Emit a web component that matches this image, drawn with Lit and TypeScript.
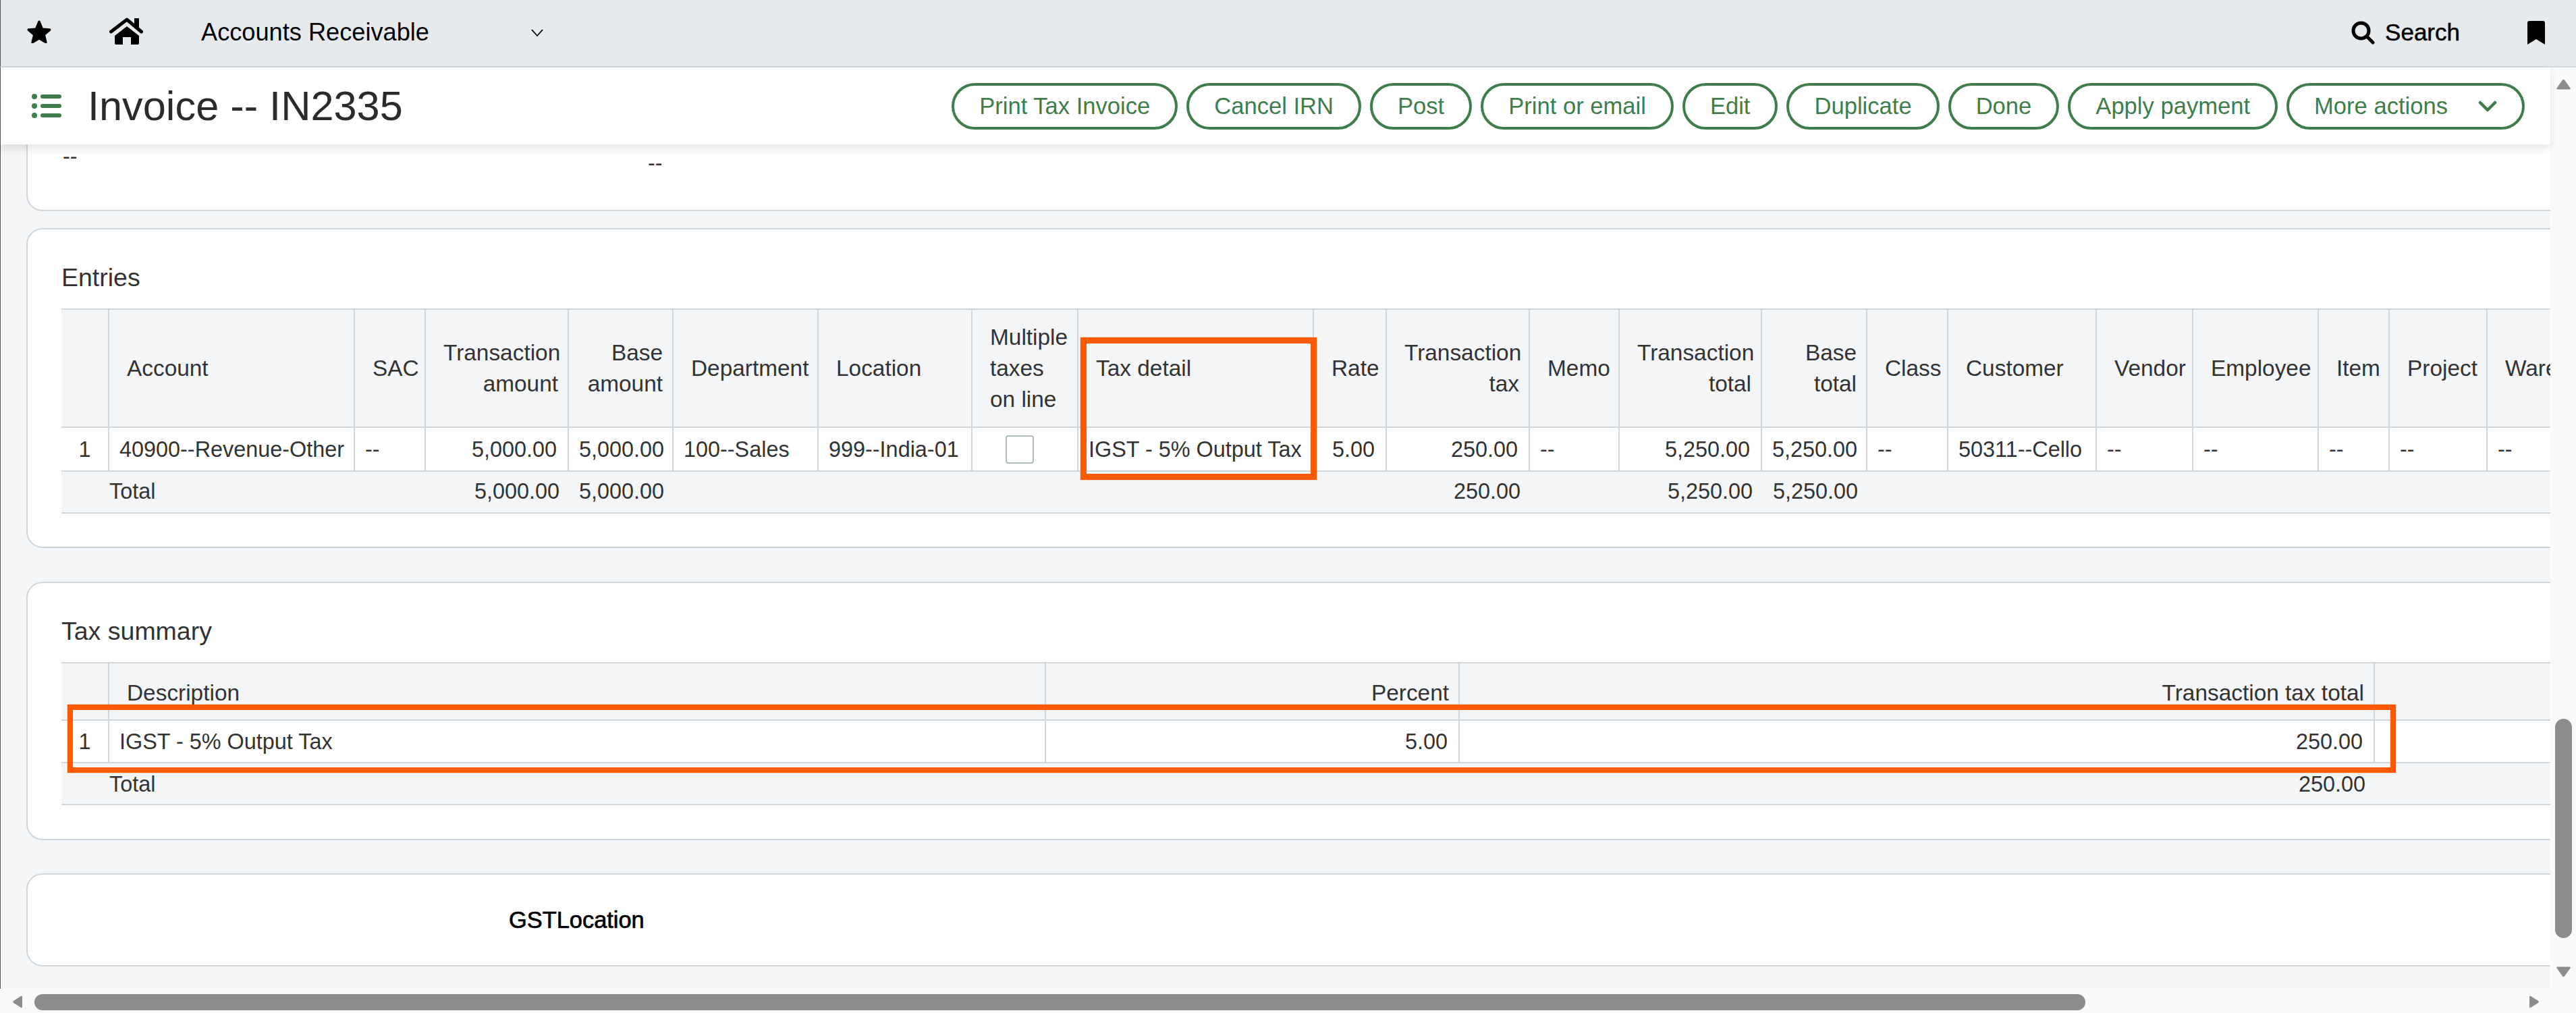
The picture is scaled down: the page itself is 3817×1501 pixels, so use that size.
import { LitElement, html, css, svg } from 'lit';
import { customElement } from 'lit/decorators.js';

type Column = {
  label: string;
  width: number;
  right?: boolean;
  value?: string;
  total?: string;
};

const entryColumns: Column[] = [
  { label: '', width: 71, value: '1' },
  { label: 'Account', width: 364, value: '40900--Revenue-Other', total: 'Total' },
  { label: 'SAC', width: 105, value: '--' },
  { label: 'Transaction\namount', width: 212, right: true, value: '5,000.00', total: '5,000.00' },
  { label: 'Base\namount', width: 155, right: true, value: '5,000.00', total: '5,000.00' },
  { label: 'Department', width: 215, value: '100--Sales' },
  { label: 'Location', width: 228, value: '999--India-01' },
  { label: 'Multiple\ntaxes\non line', width: 157, value: 'checkbox' },
  { label: 'Tax detail', width: 349, value: 'IGST - 5% Output Tax' },
  { label: 'Rate', width: 108, value: '5.00' },
  { label: 'Transaction\ntax', width: 212, right: true, value: '250.00', total: '250.00' },
  { label: 'Memo', width: 133, value: '--' },
  { label: 'Transaction\ntotal', width: 211, right: true, value: '5,250.00', total: '5,250.00' },
  { label: 'Base\ntotal', width: 156, right: true, value: '5,250.00', total: '5,250.00' },
  { label: 'Class', width: 120, value: '--' },
  { label: 'Customer', width: 220, value: '50311--Cello' },
  { label: 'Vendor', width: 143, value: '--' },
  { label: 'Employee', width: 186, value: '--' },
  { label: 'Item', width: 105, value: '--' },
  { label: 'Project', width: 145, value: '--' },
  { label: 'Warehouse', width: 215, value: '--' },
];

const taxColumns: Column[] = [
  { label: '', width: 71, value: '1' },
  { label: 'Description', width: 1388, value: 'IGST - 5% Output Tax', total: 'Total' },
  { label: 'Percent', width: 613, right: true, value: '5.00' },
  { label: 'Transaction tax total', width: 1356, right: true, value: '250.00', total: '250.00' },
  { label: '', width: 400 },
];

const actions = [
  'Print Tax Invoice',
  'Cancel IRN',
  'Post',
  'Print or email',
  'Edit',
  'Duplicate',
  'Done',
  'Apply payment',
];

@customElement('app-root')
export class AppRoot extends LitElement {
  renderTable(columns: Column[], kind: string) {
    return html`
      <table class=${kind}>
        <colgroup>
          ${columns.map(c => html`<col style="width:${c.width}px" />`)}
        </colgroup>
        <thead>
          <tr>
            ${columns.map(
              (c, i) => html`<th class="${c.right ? 'right' : ''} ${i === columns.length - 1 && kind === 'tax' ? 'end' : ''}">${c.label}</th>`
            )}
          </tr>
        </thead>
        <tbody>
          <tr>
            ${columns.map((c, i) => this.renderCell(c, i, kind === 'tax' && i === columns.length - 1))}
          </tr>
        </tbody>
        <tfoot>
          <tr>
            ${columns.map(c => html`<td class="${c.right ? 'right' : ''}">${c.total ?? ''}</td>`)}
          </tr>
        </tfoot>
      </table>
    `;
  }

  renderCell(c: Column, i: number, isEnd: boolean) {
    if (c.value === 'checkbox') {
      return html`<td><span class="checkbox"></span></td>`;
    }
    const classes = [c.right || c.label === 'Rate' ? 'right' : '', i === 0 ? 'index' : '', isEnd ? 'end' : ''];
    return html`<td class=${classes.join(' ')}>${c.value ?? ''}</td>`;
  }

  renderTopBar() {
    return html`
      <div class="topbar">
        <svg class="star" viewBox="0 0 36 35" width="36" height="35">
          <path
            d="M18 1.5c.8 0 1.300.5 1.700 1.300l4 9.700 10 .8c1.800.2 2.500 2 1.100 3.200l-7.700 6.600 2.500 10.100c.4 1.700-1.200 2.800-2.600 1.900L18 29.800l-9 5.400c-1.400.9-3-.2-2.600-1.900l2.500-10.100-7.700-6.600C-.2 15.400.5 13.500 2.300 13.300l10-.8 4-9.700c.4-.8.900-1.300 1.700-1.300z"
          />
        </svg>
        <svg class="home" viewBox="0 0 50 41" width="50" height="41">
          <rect x="37" y="1" width="7" height="15" />
          <polyline class="roof" points="2.500,21 26,3 47.500,21" />
          <path
            d="M26 13 44 27V38a2 2 0 0 1-2 2H32V29H20V40H10a2 2 0 0 1-2-2V27z"
          />
        </svg>
        <div class="module">
          <span>Accounts Receivable</span>
          <svg viewBox="0 0 18 11" width="18" height="11">
            <polyline class="thin" points="1,1 9,10 17,1" />
          </svg>
        </div>
        <div class="search">
          <svg viewBox="0 0 36 35" width="36" height="35">
            <circle class="lens" cx="14.500" cy="14.500" r="11.500" />
            <line class="lens" x1="23" y1="23" x2="32" y2="32" />
          </svg>
          <span>Search</span>
        </div>
        <svg class="bookmark" viewBox="0 0 26 35" width="26" height="35">
          <path d="M0 3a3 3 0 0 1 3-3H23a3 3 0 0 1 3 3V35L13 27 0 35z" />
        </svg>
      </div>
    `;
  }

  renderHeader() {
    return html`
      <div class="header">
        <svg class="list" viewBox="0 0 44 36" width="44" height="36">
          ${[4, 18, 32].map(
            y => svg`
              <circle cx="4" cy=${y} r="4" />
              <rect x="13" y=${y - 3} width="31" height="6" rx="3" />
            `
          )}
        </svg>
        <h1>Invoice -- IN2335</h1>
        <div class="actions">
          ${actions.map(a => html`<button>${a}</button>`)}
          <button class="more">
            More actions
            <svg viewBox="0 0 28 17" width="28" height="17">
              <polyline points="3,3 14,14 25,3" />
            </svg>
          </button>
        </div>
      </div>
    `;
  }

  render() {
    return html`
      ${this.renderTopBar()}
      <div class="shell">
        <div class="main">
          ${this.renderHeader()}
          <div class="scrollport">
            <section class="card first">
              <span>--</span>
              <span class="lower">--</span>
            </section>

            <section class="card entries">
              <h2>Entries</h2>
              ${this.renderTable(entryColumns, 'entry')}
              <div class="mark mark-detail"></div>
            </section>

            <section class="card summary">
              <h2>Tax summary</h2>
              ${this.renderTable(taxColumns, 'tax')}
              <div class="mark mark-row"></div>
            </section>

            <section class="card location">
              <strong>GSTLocation</strong>
            </section>
          </div>
          <div class="hbar">
            <svg class="arrow" viewBox="0 0 15 19" width="15" height="19">
              <path d="M13 1 2 8a2 2 0 0 0 0 3l11 7a1.500 1.500 0 0 0 2-1V2a1.500 1.500 0 0 0-2-1z" />
            </svg>
            <div class="hthumb"></div>
            <svg class="arrow end" viewBox="0 0 15 19" width="15" height="19">
              <path d="M2 1 13 8a2 2 0 0 1 0 3L2 18a1.500 1.500 0 0 1-2-1V2A1.500 1.500 0 0 1 2 1z" />
            </svg>
          </div>
        </div>
        <div class="vbar">
          <svg class="arrow" viewBox="0 0 21 16" width="21" height="16">
            <path d="M9 1.500a2 2 0 0 1 3 0l8.500 12a1.200 1.200 0 0 1-1 2h-18a1.200 1.200 0 0 1-1-2z" />
          </svg>
          <div class="vthumb"></div>
          <svg class="arrow" viewBox="0 0 21 16" width="21" height="16">
            <path d="M9 14.500a2 2 0 0 0 3 0l8.500-12a1.200 1.200 0 0 0-1-2h-18a1.200 1.200 0 0 0-1 2z" />
          </svg>
        </div>
      </div>
    `;
  }

  static styles = css`
    :host {
      display: block;
      width: 3817px;
      height: 1501px;
      overflow: hidden;
      background: #f4f5f7;
      color: #333;
      font-family: 'Liberation Sans', Arial, sans-serif;
      font-size: 32.4px;
    }

    /* top nav */
    .topbar {
      display: flex;
      align-items: center;
      box-sizing: border-box;
      height: 100px;
      padding: 0 46px 2px 39px;
      background: #e6eaed;
      border-left: 1px solid #555;
      border-bottom: 2px solid #cfd6dc;
      color: #000;
    }
    .star {
      margin: 0 86px 3px 0;
    }
    .home {
      margin: 0 86px 3px 0;
    }
    .roof {
      fill: none;
      stroke: #000;
      stroke-width: 5;
      stroke-linecap: round;
      stroke-linejoin: round;
    }
    .module {
      display: flex;
      align-items: center;
      justify-content: space-between;
      width: 507px;
      font-size: 36.2px;
    }
    .thin {
      fill: none;
      stroke: #000;
      stroke-width: 1.800;
    }
    .search {
      display: flex;
      align-items: center;
      gap: 14px;
      margin-left: auto;
      font-size: 35px;
      -webkit-text-stroke: 0.5px #000;
    }
    .lens {
      fill: none;
      stroke: #000;
      stroke-width: 5;
      stroke-linecap: round;
    }
    .bookmark {
      margin-left: 100px;
    }

    /* page frame */
    .shell {
      display: grid;
      grid-template-columns: 1fr 38px;
      height: 1401px;
    }
    .main {
      display: flex;
      flex-direction: column;
      min-width: 0;
      height: 1401px;
    }
    .header {
      position: relative;
      z-index: 2;
      display: flex;
      align-items: center;
      flex: none;
      box-sizing: border-box;
      height: 114px;
      padding: 0 38px 0 46px;
      background: #fff;
      border-left: 1px solid #555;
      box-shadow: 0 6px 12px rgba(0, 0, 0, 0.1);
    }
    .list {
      margin-right: 39px;
      fill: #3f7d4d;
    }
    h1 {
      margin: 0;
      font-size: 61.3px;
      font-weight: 400;
      color: #2b2b2b;
    }
    .actions {
      display: flex;
      gap: 13px;
      margin-left: auto;
    }
    button {
      display: flex;
      align-items: center;
      box-sizing: border-box;
      height: 69px;
      padding: 0 37px;
      background: #fff;
      border: 4px solid #3f7d4d;
      border-radius: 35px;
      color: #3f7d4d;
      font: inherit;
      font-size: 34.6px;
    }
    .more {
      gap: 45px;
    }
    .more polyline {
      fill: none;
      stroke: #3f7d4d;
      stroke-width: 4.500;
      stroke-linecap: round;
      stroke-linejoin: round;
    }

    /* scrolled content */
    .scrollport {
      flex: 1;
      min-height: 0;
      overflow: hidden;
      border-left: 1px solid #555;
      padding-left: 38px;
    }
    .card {
      position: relative;
      box-sizing: border-box;
      width: 3900px;
      margin-bottom: 50px;
      background: #fff;
      border: 2px solid #cfd6dc;
      border-radius: 24px;
    }
    .first {
      display: flex;
      height: 99px;
      margin-bottom: 25px;
      padding: 0 0 0 52px;
      border-top: none;
      border-radius: 0 0 24px 24px;
    }
    .first span {
      width: 867px;
      line-height: 37px;
    }
    .first .lower {
      padding-top: 10px;
    }
    .entries {
      padding-bottom: 49px;
    }
    .summary {
      margin-bottom: 49px;
      padding-bottom: 50px;
    }
    h2 {
      box-sizing: border-box;
      height: 117px;
      margin: 0;
      padding: 50px 0 0 50px;
      font-size: 37.5px;
      font-weight: 400;
      line-height: 42px;
    }
    .location {
      display: flex;
      align-items: center;
      height: 138px;
      margin-bottom: 0;
      padding-left: 713px;
    }
    .location strong {
      color: #000;
      font-size: 34.4px;
      font-weight: 400;
      -webkit-text-stroke: 0.7px #000;
    }

    /* tables */
    table {
      margin-left: 50px;
      table-layout: fixed;
      border-collapse: separate;
      border-spacing: 0;
      width: 3809px;
    }
    th {
      box-sizing: border-box;
      height: 177px;
      padding: 0 14px 0 26px;
      background: #f4f5f7;
      border-top: 2px solid #cfd6dc;
      border-bottom: 2px solid #cfd6dc;
      border-right: 2px solid #cfd6dc;
      font-size: 33.4px;
      font-weight: 400;
      line-height: 46px;
      text-align: left;
      white-space: pre-line;
    }
    th.right,
    td.right {
      text-align: right;
    }
    th.end,
    tbody td.end {
      border-right: none;
    }
    td {
      box-sizing: border-box;
      padding: 0 16px 0 15px;
      white-space: nowrap;
      overflow: hidden;
    }
    tbody td {
      height: 65px;
      padding-top: 2px;
      border-bottom: 2px solid #cfd6dc;
      border-right: 2px solid #cfd6dc;
    }
    td.index {
      padding: 2px 0 0;
      text-align: center;
    }
    tfoot td {
      height: 62px;
      padding: 0 14px 1px 0;
      background: #f4f5f7;
      border-bottom: 2px solid #cfd6dc;
    }
    .checkbox {
      display: block;
      box-sizing: border-box;
      width: 42px;
      height: 42px;
      margin: -2px 0 0 34px;
      background: #fff;
      border: 2px solid #adb9bc;
      border-radius: 4px;
    }
    .tax th {
      height: 87px;
      padding-top: 5px;
    }
    .tax tbody td {
      height: 63px;
    }
    .tax tfoot td {
      padding-bottom: 0;
      padding-top: 2px;
    }

    /* annotations drawn over the screenshot */
    .mark {
      position: absolute;
      box-sizing: border-box;
      border: 9px solid #ff5a00;
      box-shadow: 0 0 0 1px rgba(255, 90, 0, 0.18);
      pointer-events: none;
    }
    .mark-detail {
      left: 1560px;
      top: 160px;
      width: 350px;
      height: 211px;
    }
    .mark-row {
      left: 59px;
      top: 180px;
      width: 3450px;
      height: 101px;
      border-width: 8px;
    }

    /* scrollbars */
    .hbar {
      display: flex;
      align-items: center;
      flex: none;
      box-sizing: border-box;
      height: 36px;
      padding: 3px 16px 0 18px;
      background: #fafafa;
    }
    .hthumb {
      width: 3039px;
      height: 24px;
      margin-left: 18px;
      background: #8c8c8c;
      border-radius: 12px;
    }
    .arrow {
      flex: none;
      fill: #8c8c8c;
    }
    .arrow.end {
      margin-left: auto;
    }
    .vbar {
      display: flex;
      flex-direction: column;
      align-items: center;
      box-sizing: border-box;
      padding-top: 17px;
      background: #fafafa;
    }
    .vthumb {
      width: 25px;
      height: 325px;
      margin: 932px 0 42px;
      background: #8c8c8c;
      border-radius: 12.500px;
    }
  `;
}
